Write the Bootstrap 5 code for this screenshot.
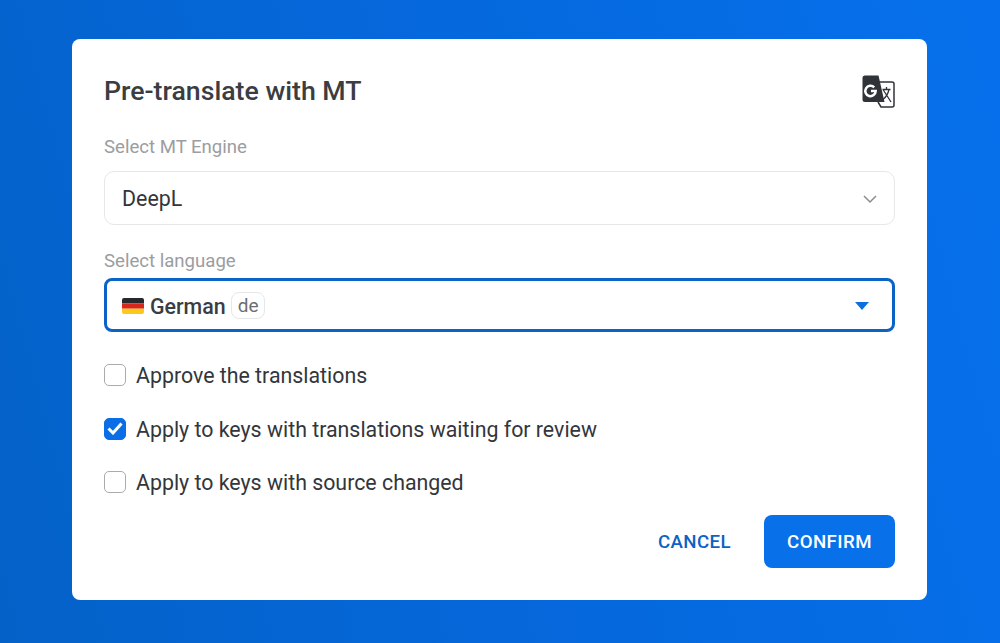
<!DOCTYPE html>
<html lang="en"><head><meta charset="utf-8"><title>Pre-translate with MT</title>
<link href="https://cdn.jsdelivr.net/npm/bootstrap@5.3.0/dist/css/bootstrap.min.css" rel="stylesheet">
<style>
html,body{height:643px;overflow:hidden}
body{background:linear-gradient(75deg,#0461c8 0%,#0568dc 50%,#0670ec 100%);font-family:Roboto,sans-serif;color:#2f3237}
.dlg{width:855px;height:561px;margin:39px 0 0 72px;padding:32px;border-radius:8px;background:#fff}
.dlg-title{font-size:26.7px;font-weight:500;line-height:40px;margin:0;color:#3a3d42}
.field-label{font-size:18.6px;line-height:24px;color:#9b9da1;display:block;padding-top:1px}
.label-first{margin-top:23px}
.field-gap{margin-top:23px}
.select-box{height:54px;border:1px solid #e6e7e9;border-radius:10px;padding:2px 16px 0 17px;font-size:21.4px;margin-top:12px;color:#33363b}
.select-focus{height:54px;border:3px solid #0b63c5;border-radius:8px;padding:2px 15px 0;font-size:21.4px;margin-top:5px}
.flag-mark{margin-right:6px}
.lang-name{font-weight:500;color:#3a3d42;padding-top:2px}
.lang-code{border:1px solid #e6e7e9;border-radius:8px;padding:0 6px;font-size:19px;line-height:25px;color:#6b6e73;margin-left:5px}
.caret-mark{margin-right:8px}
.opt{font-size:21.35px;line-height:28px;height:28px;color:#33363b}
.opt-t{margin-left:2px;padding-top:2px}
.opt-first{margin-top:29px}
.opt-next{margin-top:25.5px}
.box{width:22px;height:22px;border:1px solid #a9abaf;border-radius:5px;background:#fff;flex:none}
.box-on{background:#0a6fe6;border-color:#0a6fe6}
.acts{margin-top:19px}
.act{font-size:18.7px;font-weight:500;letter-spacing:.4px;border:0;border-radius:8px;height:53px;padding-top:2px}
.act-cancel{color:#0b63c5;background:transparent;padding-left:10px;padding-right:9px}
.act-confirm{color:#fff;background:#0871ea;width:131px;padding-left:0;padding-right:0}
</style></head>
<body class="m-0">
<div class="dlg d-flex flex-column">
  <div class="d-flex justify-content-between align-items-center">
    <h1 class="dlg-title">Pre-translate with MT</h1>
    <svg width="33" height="33" viewBox="0 0 33 33" aria-hidden="true">
      <path d="M17 7h13a2 2 0 0 1 2 2v21a2 2 0 0 1-2 2H19l-3-5" fill="none" stroke="#303338" stroke-width="1.500"/>
      <path d="M3 .5h13.500l6 26.500H3a2.500 2.500 0 0 1-2.500-2.500V3A2.500 2.500 0 0 1 3 .5z" fill="#303338"/>
      <path d="M12.200 12.300a5.200 5.200 0 1 0 1.500 3.700H9" fill="none" stroke="#fff" stroke-width="2.500"/>
      <path d="M20.500 14.500h8M24.500 12v2.500M21 14.500l8 12.500M27 14.500c-1 4.500-3 7.500-6 10" fill="none" stroke="#303338" stroke-width="1.300"/>
    </svg>
  </div>
  <label class="field-label label-first">Select MT Engine</label>
  <div class="select-box d-flex justify-content-between align-items-center">
    <span>DeepL</span>
    <svg width="16" height="10" viewBox="0 0 16 10" aria-hidden="true"><path d="M2 2l6 6 6-6" fill="none" stroke="#8a8c90" stroke-width="1.500"/></svg>
  </div>
  <label class="field-label field-gap">Select language</label>
  <div class="select-focus d-flex justify-content-between align-items-center">
    <span class="d-flex align-items-center">
      <svg width="22" height="16" viewBox="0 0 22 16" class="flag-mark" aria-hidden="true"><defs><clipPath id="fc"><rect width="22" height="16" rx="2"/></clipPath></defs><g clip-path="url(#fc)"><rect width="22" height="5.400" fill="#26282b"/><rect y="5.400" width="22" height="5.300" fill="#d9261c"/><rect y="10.700" width="22" height="5.300" fill="#fbc91c"/></g></svg>
      <span class="lang-name">German</span>
      <span class="lang-code">de</span>
    </span>
    <svg width="14" height="8" viewBox="0 0 14 8" class="caret-mark" aria-hidden="true"><path d="M0 0h14L7 8z" fill="#0b6fe0"/></svg>
  </div>
  <div class="d-flex align-items-center gap-2 opt-first opt"><span class="box"></span><span class="opt-t">Approve the translations</span></div>
  <div class="d-flex align-items-center gap-2 opt-next opt"><span class="box box-on d-flex align-items-center justify-content-center"><svg width="16" height="13" viewBox="0 0 16 13" aria-hidden="true"><path d="M1.500 6.500l4.500 4.500L14.500 1.500" fill="none" stroke="#fff" stroke-width="3"/></svg></span><span class="opt-t">Apply to keys with translations waiting for review</span></div>
  <div class="d-flex align-items-center gap-2 opt-next opt"><span class="box"></span><span class="opt-t">Apply to keys with source changed</span></div>
  <div class="d-flex justify-content-end align-items-center gap-4 acts">
    <button class="act act-cancel" type="button">CANCEL</button>
    <button class="act act-confirm" type="button">CONFIRM</button>
  </div>
</div>
</body></html>
